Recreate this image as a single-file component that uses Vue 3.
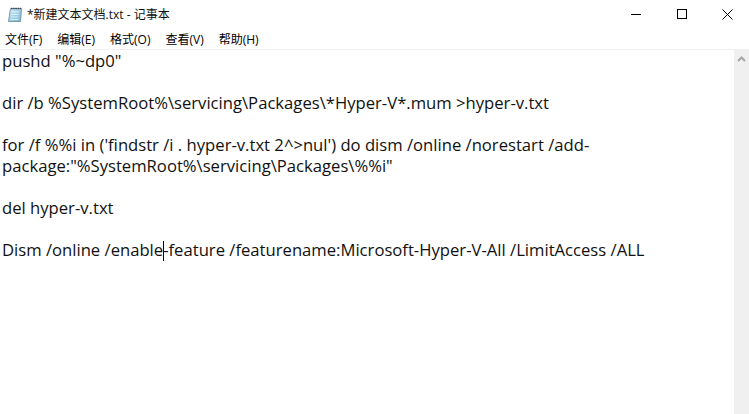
<script setup>
const menus = ['文件(F)', '编辑(E)', '格式(O)', '查看(V)', '帮助(H)']
</script>

<template>
  <div class="win">
    <header class="titlebar">
      <svg class="appicon" width="16" height="17" viewBox="0 0 16 17">
        <defs>
          <linearGradient id="pad" x1="0" y1="0" x2="1" y2="1">
            <stop offset="0" stop-color="#d5eef8" />
            <stop offset="1" stop-color="#6fb3d6" />
          </linearGradient>
        </defs>
        <path d="M3.5 2.5 H14.5 L13.5 15.5 H1.5 Z" fill="url(#pad)" stroke="#7d9aa8" />
        <path d="M4 2.5 H14" stroke="#37474f" stroke-width="1.6" stroke-dasharray="1.4 0.8" />
        <path d="M4.5 6 H12 M4.2 8.5 H11.8 M4 11 H11.6 M3.8 13.5 H11.4" stroke="#eaf6fb" stroke-width="0.8" />
      </svg>
      <span class="title">*新建文本文档.txt - 记事本</span>
      <div class="controls">
        <svg width="46" height="28" viewBox="0 0 46 28"><path d="M18 14.5 H28" stroke="#000" fill="none" /></svg>
        <svg width="45" height="28" viewBox="0 0 45 28"><rect x="18.5" y="9.5" width="9" height="9" stroke="#000" fill="none" /></svg>
        <svg width="46" height="28" viewBox="0 0 46 28"><path d="M18.5 9.5 L28.5 19.5 M28.5 9.5 L18.5 19.5" stroke="#000" fill="none" /></svg>
      </div>
    </header>
    <nav class="menubar">
      <span v-for="m in menus" :key="m" class="menu">{{ m }}</span>
    </nav>
    <div class="body">
      <main class="editor">
        <p>pushd "%~dp0"</p>
        <p>&nbsp;</p>
        <p>dir /b %SystemRoot%\servicing\Packages\*Hyper-V*.mum &gt;hyper-v.txt</p>
        <p>&nbsp;</p>
        <p>for /f %%i in ('findstr /i . hyper-v.txt 2^&gt;nul') do dism /online /norestart /add-</p>
        <p>package:"%SystemRoot%\servicing\Packages\%%i"</p>
        <p>&nbsp;</p>
        <p>del hyper-v.txt</p>
        <p>&nbsp;</p>
        <p>Dism /online /enable<span class="caret"></span>-feature /featurename:Microsoft-Hyper-V-All /LimitAccess /ALL</p>
      </main>
      <aside class="scrollbar">
        <svg class="arrow" width="9" height="6" viewBox="0 0 9 6">
          <path d="M1 5 L4.5 1.5 L8 5" fill="none" stroke="#a6a6a6" stroke-width="2" />
        </svg>
      </aside>
    </div>
  </div>
</template>

<style>
html, body { margin: 0; background: #fff; overflow: hidden; }
</style>

<style scoped>
.win {
  width: 749px;
  height: 414px;
  background: #fff;
  display: flex;
  flex-direction: column;
  font-family: "Open Sans", "Noto Sans CJK SC", sans-serif;
  color: #000;
  overflow: hidden;
}
.titlebar {
  height: 28px;
  display: flex;
  align-items: center;
  padding-left: 7px;
  flex-shrink: 0;
}
.appicon { margin-right: 4px; }
.title { font-size: 12px; color: #111; }
.controls { margin-left: auto; display: flex; margin-right: -1px; }
.menubar {
  height: 21px;
  display: flex;
  align-items: center;
  gap: 15px;
  padding-left: 5px;
  font-size: 12px;
  border-bottom: 1px solid #f0f0f0;
  flex-shrink: 0;
}
.body {
  flex: 1;
  display: flex;
  min-height: 0;
}
.editor {
  flex: 1;
  padding-left: 2px;
  font-size: 16.65px;
  line-height: 21px;
  color: #111;
}
.editor p { margin: 0; white-space: pre; height: 21px; }
.caret {
  display: inline-block;
  width: 1px;
  height: 20px;
  margin-right: -1px;
  background: #000;
  vertical-align: -5px;
}
.scrollbar {
  width: 15px;
  background: #f0f0f0;
  display: flex;
  justify-content: center;
  align-items: flex-start;
  padding-top: 6px;
  box-sizing: border-box;
}
</style>
